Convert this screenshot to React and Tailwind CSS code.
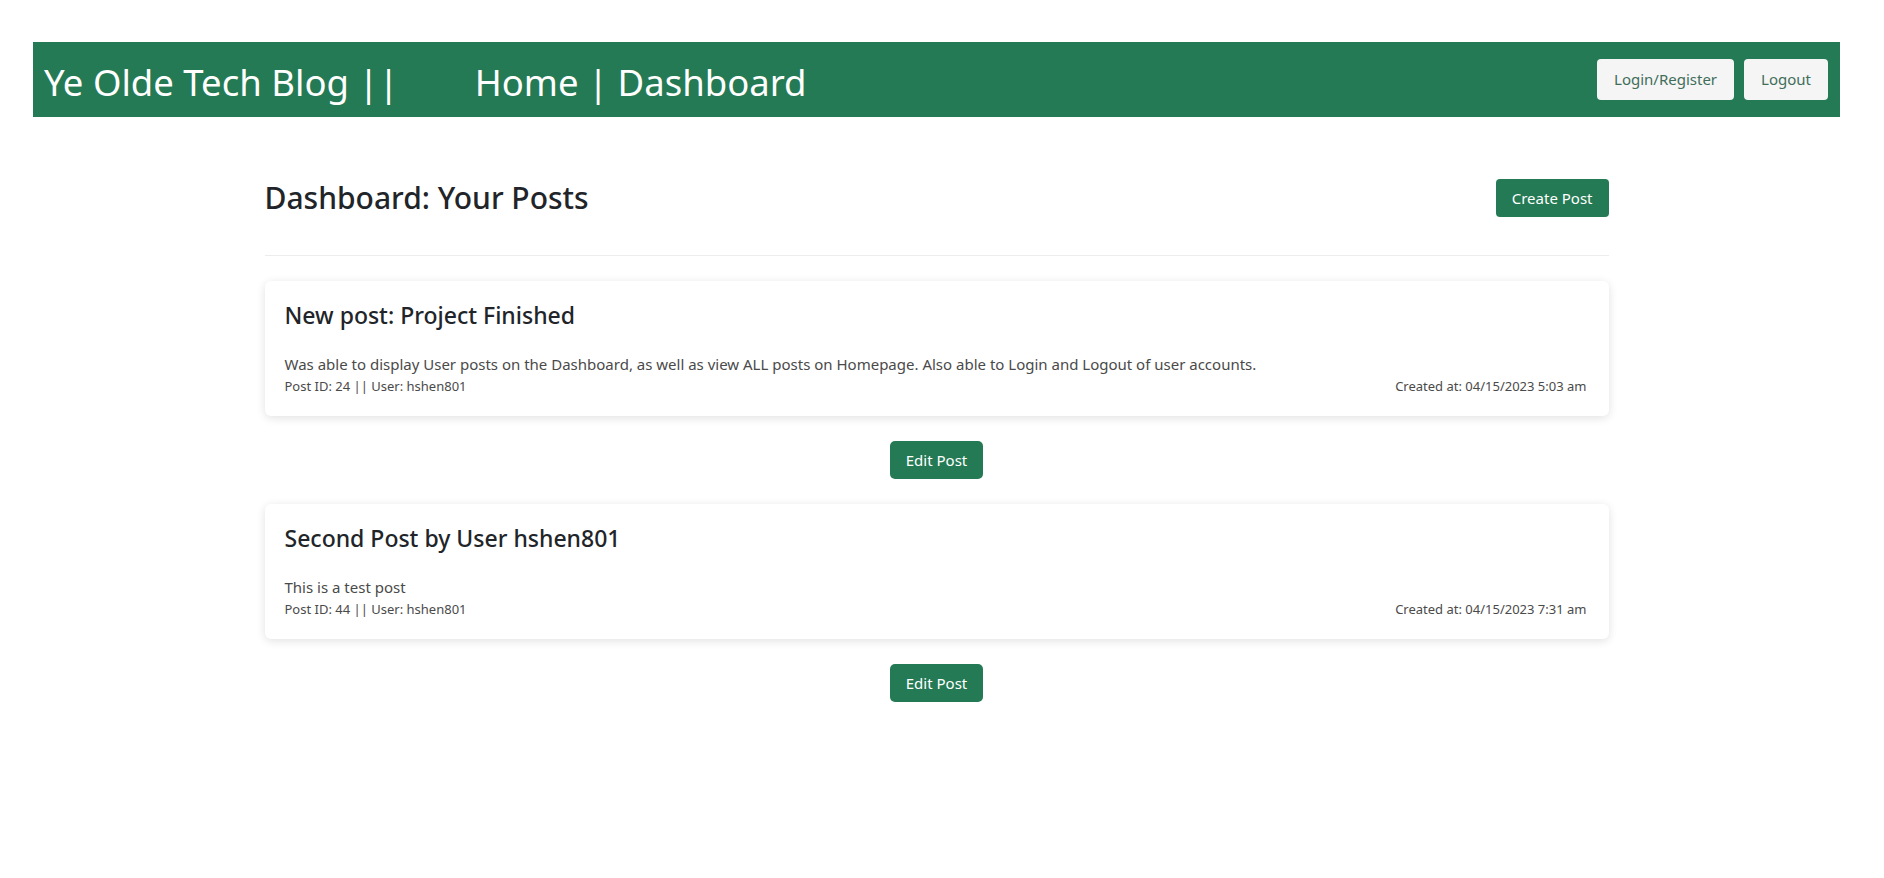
const posts = [
  {
    id: 24,
    title: 'New post: Project Finished',
    body: 'Was able to display User posts on the Dashboard, as well as view ALL posts on Homepage. Also able to Login and Logout of user accounts.',
    user: 'hshen801',
    created: '04/15/2023 5:03 am',
  },
  {
    id: 44,
    title: 'Second Post by User hshen801',
    body: 'This is a test post',
    user: 'hshen801',
    created: '04/15/2023 7:31 am',
  },
];

const PostCard = ({ post }) => (
  <>
    <div className="bg-white rounded-md shadow-[0_2px_10px_rgba(0,0,0,0.12)] px-5 pt-5 pb-5">
      <h3 className="text-[23px] leading-[29px] font-medium text-[#212529]">{post.title}</h3>
      <p className="mt-[22px] text-[15px] leading-6 text-[#4a4a4a]">{post.body}</p>
      <div className="flex justify-between text-[13px] leading-5 text-[#4a4a4a] pr-[2px]">
        <span>Post ID: {post.id} || User: {post.user}</span>
        <span>Created at: {post.created}</span>
      </div>
    </div>
    <div className="flex justify-center mt-[25px] mb-[25px]">
      <button className="h-[38px] px-4 rounded-[5px] bg-[#247a54] text-white text-[15px]">
        Edit Post
      </button>
    </div>
  </>
);

export default function App() {
  return (
    <div className="min-h-screen bg-white pt-[42px] pl-[33px] pr-[44px] font-['Noto_Sans',sans-serif] text-[#212529]">
      <nav className="h-[75px] bg-[#247a54] flex items-center justify-between pl-[11px] pr-[12px]">
        <div className="flex items-center pt-[5px] text-white text-[36.5px] leading-none">
          <span>Ye Olde Tech Blog ||</span>
          <span className="ml-[76px]">Home | Dashboard</span>
        </div>
        <div className="flex gap-[10px]">
          <button className="h-[41px] px-[17px] rounded-[4px] bg-[#f5f5f5] text-[#3f6e5b] text-[15px]">
            Login/Register
          </button>
          <button className="h-[41px] px-[17px] rounded-[4px] bg-[#f5f5f5] text-[#3f6e5b] text-[15px]">
            Logout
          </button>
        </div>
      </nav>

      <main className="w-[1344px] mx-auto">
        <div className="flex items-center justify-between mt-[62px]">
          <h2 className="text-[30px] leading-[38px] font-medium">Dashboard: Your Posts</h2>
          <button className="h-[38px] px-4 rounded-[4px] bg-[#247a54] text-white text-[15px]">
            Create Post
          </button>
        </div>
        <hr className="mt-[38px] mb-[25px] border-t border-[#ececec]" />
        {posts.map((p) => (
          <PostCard key={p.id} post={p} />
        ))}
      </main>
    </div>
  );
}
